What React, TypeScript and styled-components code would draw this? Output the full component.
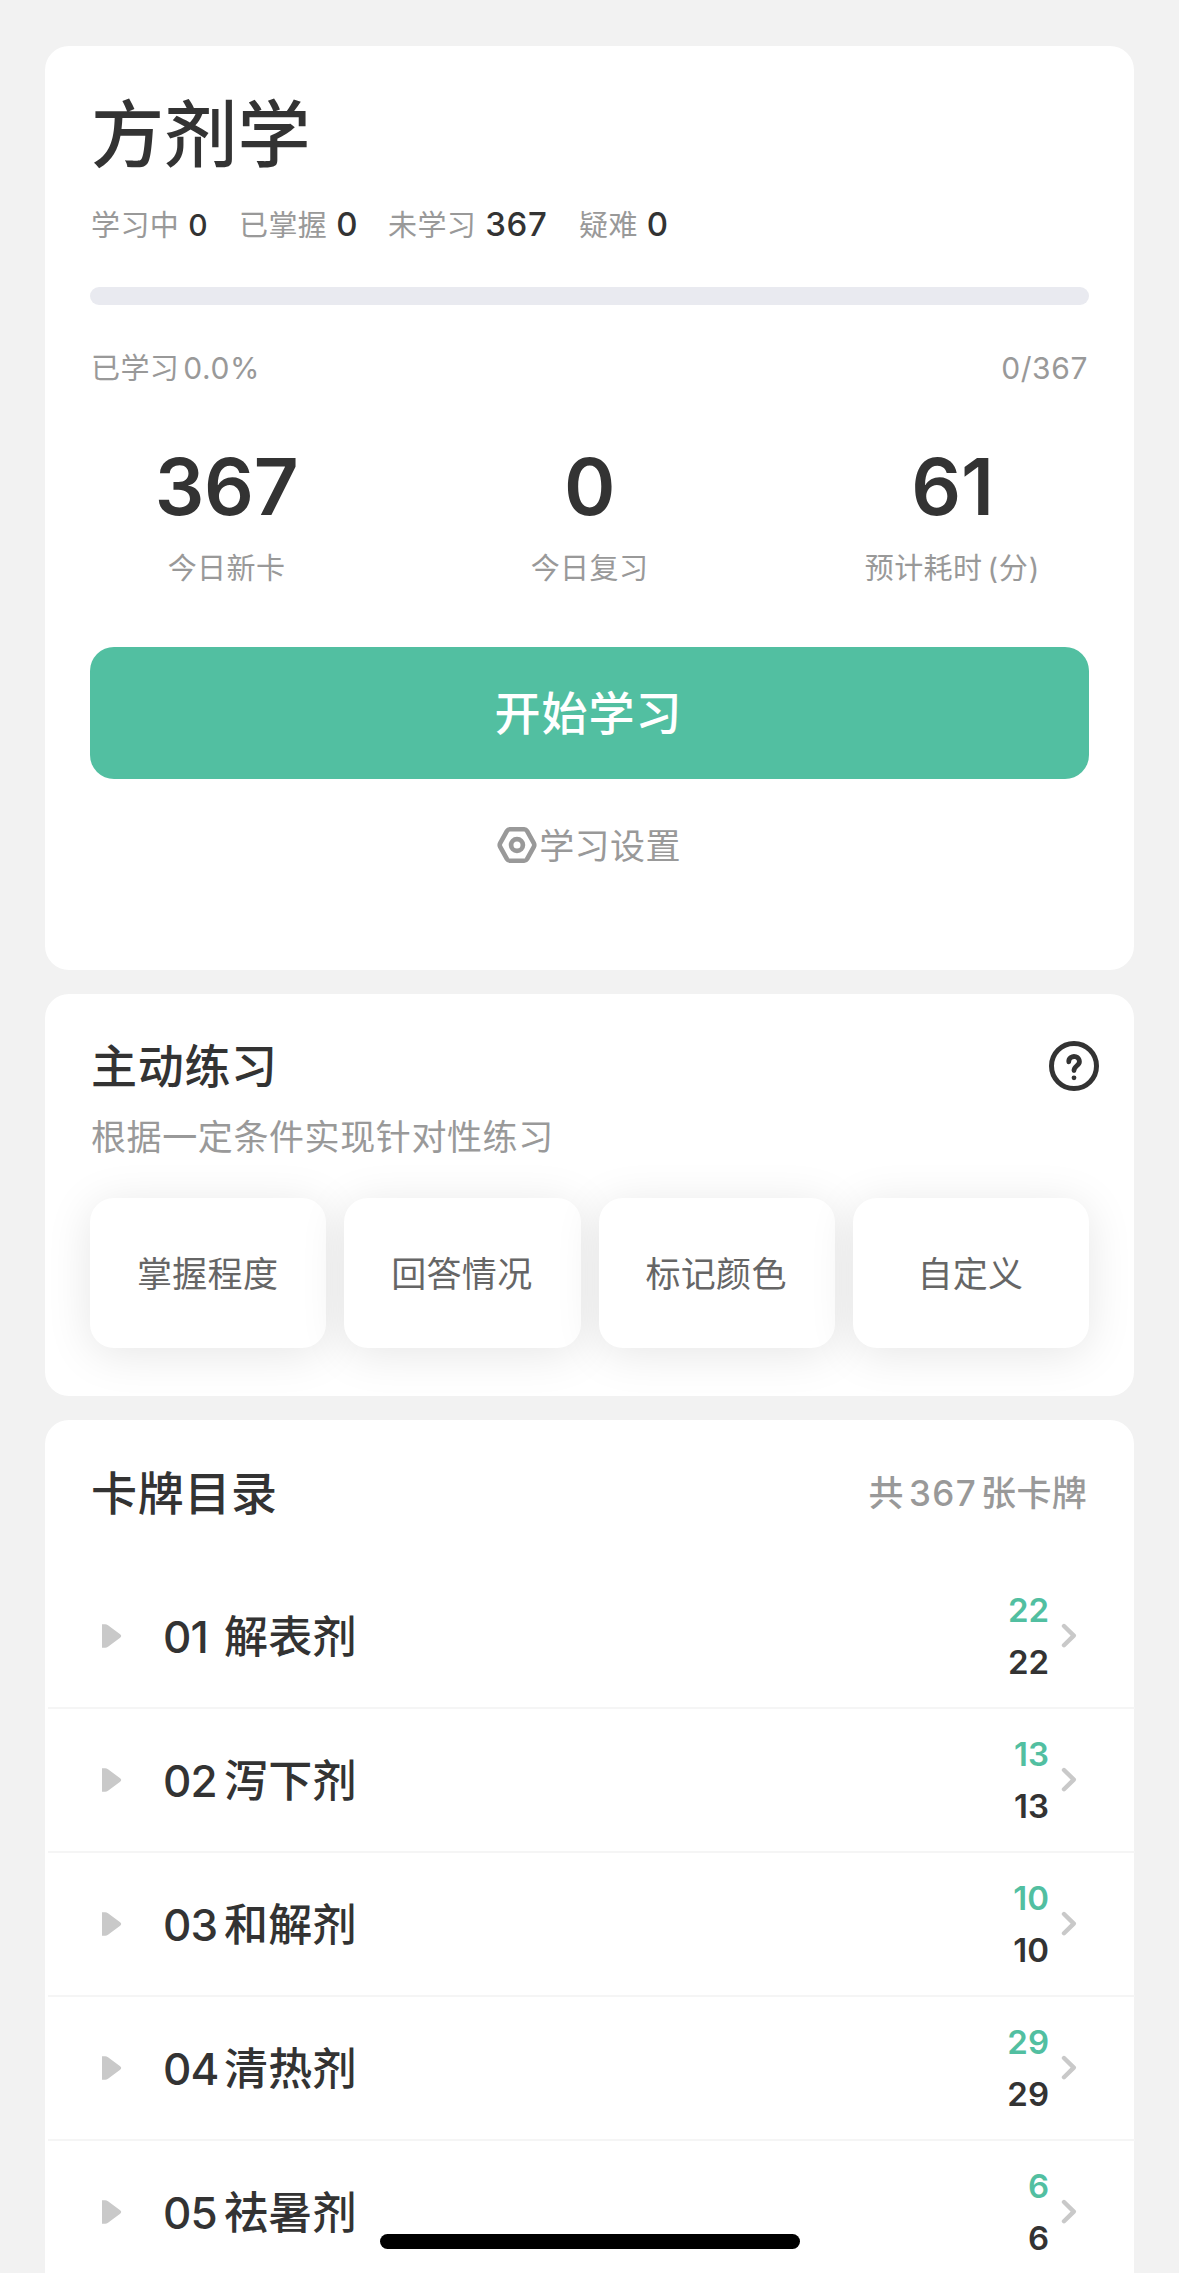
import React from "react";
import styled, { createGlobalStyle } from "styled-components";

const GlobalStyle = createGlobalStyle`
  * { box-sizing: border-box; }
  html, body { margin: 0; padding: 0; }
  body {
    background: #f2f2f2;
    color: #333;
    font-family: Inter, "Noto Sans CJK SC", sans-serif;
  }
  button { border: 0; padding: 0; background: none; font: inherit; color: inherit; }
  h1, h2, p { margin: 0; }
`;

const Screen = styled.main`
  width: 1179px;
  height: 2273px;
  padding: 46px 45px 0;
  overflow: hidden;
  display: flex;
  flex-direction: column;
  gap: 24px;
`;

const Card = styled.section<{ $height: number }>`
  flex: none;
  height: ${(p) => p.$height}px;
  padding: 0 45px;
  background: #fff;
  border-radius: 24px;
`;

const DeckTitle = styled.h1`
  padding: 39px 0 0 1px;
  font-size: 73px;
  line-height: 100px;
  font-weight: 500;
  letter-spacing: 0.3px;
`;

const Tallies = styled.div`
  display: flex;
  margin-top: 21px;
  padding-left: 1px;
  line-height: 40px;
`;

const Tally = styled.div<{ $width: number }>`
  display: flex;
  align-items: baseline;
  width: ${(p) => p.$width}px;
`;

const TallyLabel = styled.span`
  font-size: 29px;
  letter-spacing: 0.4px;
  color: #999;
`;

const TallyValue = styled.span<{ $size: number }>`
  margin-left: 9px;
  font-size: ${(p) => p.$size}px;
  line-height: 1;
  font-weight: 500;
  letter-spacing: 0.7px;
`;

const ProgressTrack = styled.div`
  height: 18px;
  margin-top: 41px;
  border-radius: 9px;
  background: #e9eaf0;
`;

const ProgressInfo = styled.div`
  display: flex;
  justify-content: space-between;
  margin-top: 44px;
  padding: 0 1px;
  font-size: 29px;
  line-height: 40px;
  letter-spacing: 0.4px;
  color: #999;
`;

const Figure = styled.span<{ $gap?: number }>`
  margin-left: ${(p) => p.$gap ?? 0}px;
  font-size: 30px;
  line-height: 1;
  letter-spacing: 0.6px;
`;

const Summary = styled.div`
  display: grid;
  grid-template-columns: repeat(3, 1fr);
  margin: 53px -45px 0;
  text-align: center;
`;

const SummaryValue = styled.div`
  font-size: 78px;
  line-height: 90px;
  font-weight: 600;
  letter-spacing: -0.3px;
`;

const SummaryLabel = styled.div`
  margin-top: 17px;
  font-size: 29px;
  line-height: 40px;
  letter-spacing: 0.4px;
  color: #999;
`;

const Paren = styled.span`
  margin-left: 5px;
  letter-spacing: 0.9px;
`;

const StartButton = styled.button`
  display: block;
  width: 100%;
  height: 132px;
  margin-top: 58px;
  padding: 0 2px 6px 0;
  border-radius: 24px;
  background: #52bfa1;
  color: #fff;
  font-size: 46px;
  font-weight: 500;
  letter-spacing: 1px;
`;

const SettingsButton = styled.button`
  display: flex;
  align-items: center;
  justify-content: center;
  width: 100%;
  margin-top: 43px;
  padding-right: 1px;
  gap: 2px;
  font-size: 35px;
  line-height: 44px;
  letter-spacing: 0.4px;
  color: #999;

  span { padding-top: 2px; }
`;

const SectionHead = styled.div<{ $top: number; $right: number }>`
  display: flex;
  align-items: center;
  justify-content: space-between;
  padding: ${(p) => p.$top}px 0 0 1px;
  margin-right: ${(p) => p.$right}px;
`;

const SectionTitle = styled.h2`
  font-size: 46px;
  line-height: 60px;
  font-weight: 500;
  letter-spacing: 0.7px;
`;

const SectionHint = styled.p`
  margin-top: 19px;
  padding-left: 1px;
  font-size: 35px;
  line-height: 44px;
  letter-spacing: 0.6px;
  color: #999;
`;

const PracticeGrid = styled.div`
  display: grid;
  grid-template-columns: repeat(4, 1fr);
  gap: 18px;
  margin-top: 39px;
`;

const PracticeButton = styled.button`
  height: 150px;
  padding: 0 1px 3px 0;
  border-radius: 24px;
  background: #fff;
  box-shadow: 0 6px 46px rgba(0, 0, 0, 0.1);
  font-size: 35px;
  letter-spacing: 0.3px;
  color: #666;
`;

const CardTotal = styled.span`
  font-size: 35px;
  line-height: 60px;
  font-weight: 500;
  letter-spacing: 0.3px;
  color: #999;
`;

const TotalNumber = styled.span`
  margin: 0 4px 0 5px;
  letter-spacing: 1.4px;
`;

const Chapters = styled.ul`
  list-style: none;
  margin: 42px -46px 0 -42px;
  padding: 0;
`;

const Chapter = styled.li`
  display: flex;
  align-items: center;
  height: 144px;
  padding: 0 58px 0 54px;
  border-bottom: 2px solid #f5f5f5;
`;

const ChapterLabel = styled.div`
  display: flex;
  align-items: baseline;
  flex: 1;
  margin-left: 41px;
  padding-top: 2px;
  font-size: 44px;
  line-height: 60px;
  font-weight: 500;
`;

const ChapterNumber = styled.span`
  width: 61px;
  letter-spacing: -0.8px;
`;

const ChapterName = styled.span`
  letter-spacing: 0.3px;
`;

const Counts = styled.div`
  display: flex;
  flex-direction: column;
  margin-right: 12px;
  padding-bottom: 1px;
  text-align: right;
  font-size: 33px;
  line-height: 52px;
  font-weight: 600;
`;

const NewCount = styled.span`
  color: #52bfa1;
`;

const HomeIndicator = styled.div`
  position: fixed;
  left: 380px;
  bottom: 24px;
  width: 420px;
  height: 15px;
  border-radius: 8px;
  background: #000;
`;

const NutIcon = () => (
  <svg width="40" height="38" viewBox="0 0 40 38" fill="none" stroke="currentColor">
    <path
      d="M12.8 3.3H27.2Q29 3.3 30 4.9L36.8 17.2Q37.8 19 36.8 20.8L30 33.1Q29 34.7 27.2 34.7H12.8Q11 34.7 10 33.1L3.2 20.8Q2.2 19 3.2 17.2L10 4.9Q11 3.3 12.8 3.3Z"
      strokeWidth="4.6"
      strokeLinejoin="round"
    />
    <circle cx="20" cy="19" r="5.9" strokeWidth="4.7" />
  </svg>
);

const HelpIcon = () => (
  <svg width="50" height="50" viewBox="0 0 50 50" fill="none" stroke="#333">
    <circle cx="25" cy="25" r="22.5" strokeWidth="5" />
    <path
      d="M19.8 20.8A5.3 4.9 0 1 1 28.9 23.8C27 25.7 25 26.4 25 29.6"
      strokeWidth="4.8"
      strokeLinecap="round"
      strokeLinejoin="round"
    />
    <circle cx="25" cy="36.8" r="2.4" fill="#333" stroke="none" />
  </svg>
);

const ExpandIcon = () => (
  <svg width="20" height="24" viewBox="0 0 20 24">
    <path d="M0 0.3H3.2Q4.6 0.3 6 1.3L17.8 10Q20.6 12 17.8 14L6 22.7Q4.6 23.7 3.2 23.7H0Z" fill="#c9c9c9" />
  </svg>
);

const ChevronIcon = () => (
  <svg width="16" height="26" viewBox="0 0 16 26" fill="none">
    <path d="M3 3L12.8 12.6L3 22.2" stroke="#c9c9c9" strokeWidth="4.4" strokeLinecap="round" strokeLinejoin="round" />
  </svg>
);

const tallies = [
  { label: "学习中", value: 0, size: 30, width: 148 },
  { label: "已掌握", value: 0, size: 33, width: 149 },
  { label: "未学习", value: 367, size: 33, width: 191 },
  { label: "疑难", value: 0, size: 33, width: 100 },
];

const practices = ["掌握程度", "回答情况", "标记颜色", "自定义"];

const chapters = [
  { no: "01", name: "解表剂", fresh: 22, total: 22 },
  { no: "02", name: "泻下剂", fresh: 13, total: 13 },
  { no: "03", name: "和解剂", fresh: 10, total: 10 },
  { no: "04", name: "清热剂", fresh: 29, total: 29 },
  { no: "05", name: "祛暑剂", fresh: 6, total: 6 },
];

export default function App() {
  return (
    <>
      <GlobalStyle />
      <Screen>
        <Card $height={924}>
          <DeckTitle>方剂学</DeckTitle>
          <Tallies>
            {tallies.map((t) => (
              <Tally key={t.label} $width={t.width}>
                <TallyLabel>{t.label}</TallyLabel>
                <TallyValue $size={t.size}>{t.value}</TallyValue>
              </Tally>
            ))}
          </Tallies>
          <ProgressTrack />
          <ProgressInfo>
            <span>
              已学习<Figure $gap={4}>0.0%</Figure>
            </span>
            <span>
              <Figure>0/367</Figure>
            </span>
          </ProgressInfo>
          <Summary>
            <div>
              <SummaryValue>367</SummaryValue>
              <SummaryLabel>今日新卡</SummaryLabel>
            </div>
            <div>
              <SummaryValue>0</SummaryValue>
              <SummaryLabel>今日复习</SummaryLabel>
            </div>
            <div>
              <SummaryValue>61</SummaryValue>
              <SummaryLabel>
                预计耗时<Paren>(分)</Paren>
              </SummaryLabel>
            </div>
          </Summary>
          <StartButton>开始学习</StartButton>
          <SettingsButton>
            <NutIcon />
            <span>学习设置</span>
          </SettingsButton>
        </Card>

        <Card $height={402}>
          <SectionHead $top={42} $right={-10}>
            <SectionTitle>主动练习</SectionTitle>
            <HelpIcon />
          </SectionHead>
          <SectionHint>根据一定条件实现针对性练习</SectionHint>
          <PracticeGrid>
            {practices.map((name) => (
              <PracticeButton key={name}>{name}</PracticeButton>
            ))}
          </PracticeGrid>
        </Card>

        <Card $height={900}>
          <SectionHead $top={43} $right={2}>
            <SectionTitle>卡牌目录</SectionTitle>
            <CardTotal>
              共<TotalNumber>367</TotalNumber>张卡牌
            </CardTotal>
          </SectionHead>
          <Chapters>
            {chapters.map((c) => (
              <Chapter key={c.no}>
                <ExpandIcon />
                <ChapterLabel>
                  <ChapterNumber>{c.no}</ChapterNumber>
                  <ChapterName>{c.name}</ChapterName>
                </ChapterLabel>
                <Counts>
                  <NewCount>{c.fresh}</NewCount>
                  <span>{c.total}</span>
                </Counts>
                <ChevronIcon />
              </Chapter>
            ))}
          </Chapters>
        </Card>
      </Screen>
      <HomeIndicator />
    </>
  );
}
